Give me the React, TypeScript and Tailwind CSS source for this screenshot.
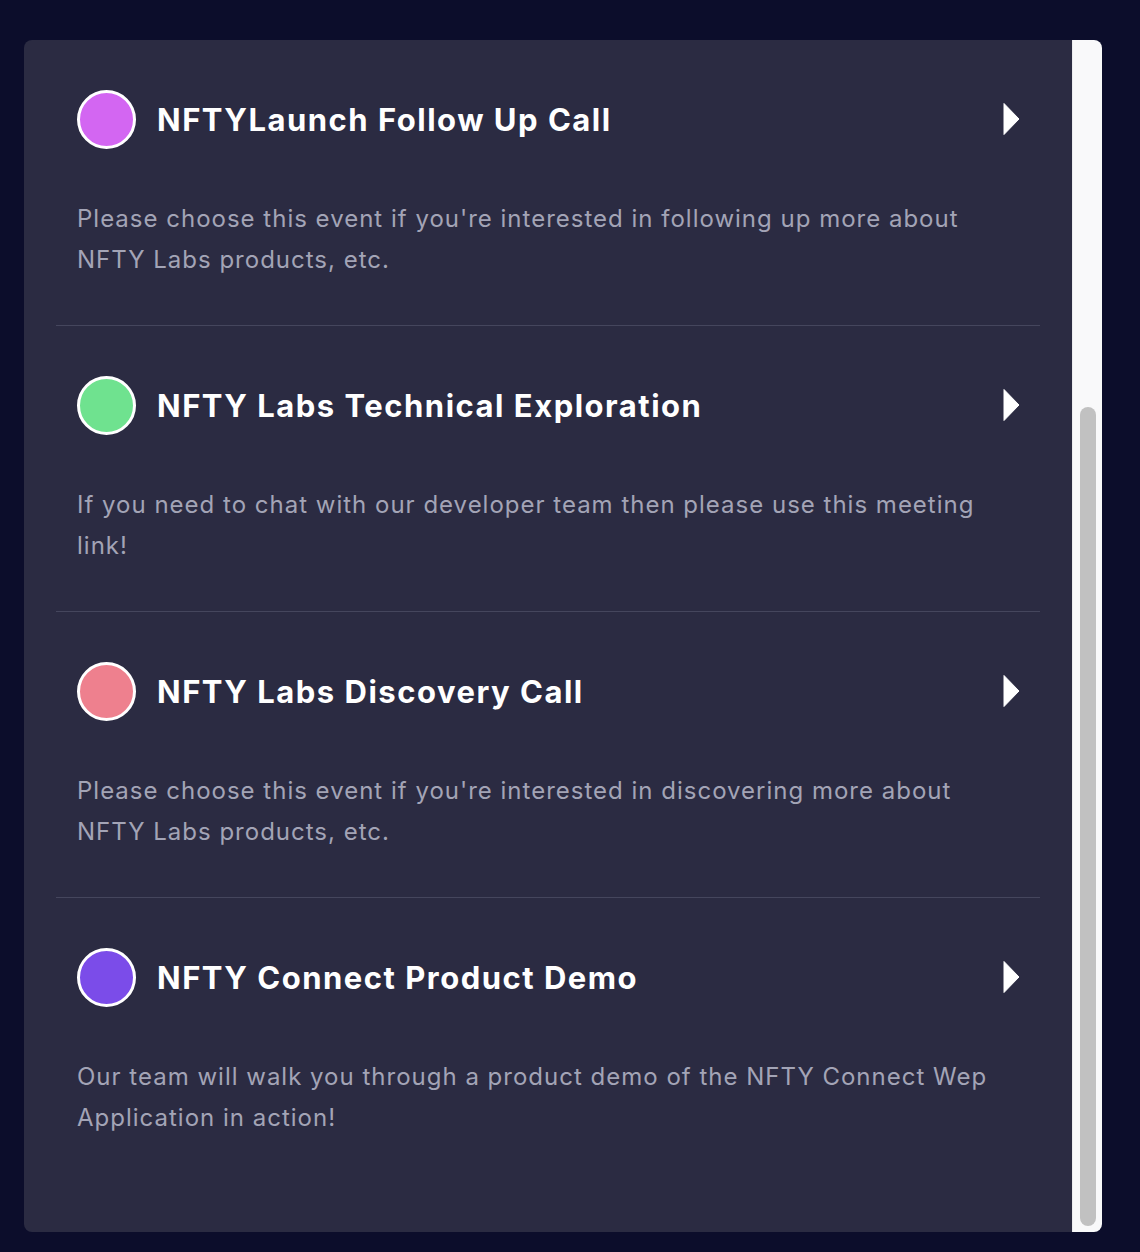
import React from "react";

const events = [
  {
    color: "#d366f2",
    title: "NFTYLaunch Follow Up Call",
    desc: "Please choose this event if you're interested in following up more about NFTY Labs products, etc.",
  },
  {
    color: "#6fe28f",
    title: "NFTY Labs Technical Exploration",
    desc: "If you need to chat with our developer team then please use this meeting link!",
  },
  {
    color: "#ee808e",
    title: "NFTY Labs Discovery Call",
    desc: "Please choose this event if you're interested in discovering more about NFTY Labs products, etc.",
  },
  {
    color: "#7b4ce9",
    title: "NFTY Connect Product Demo",
    desc: "Our team will walk you through a product demo of the NFTY Connect Wep Application in action!",
  },
];

function Chevron() {
  return (
    <svg width="19" height="34" viewBox="0 0 19 34" className="shrink-0 -mr-[1px]">
      <path d="M3 1.5 L18 17 L3 32.5 Z" fill="#ffffff" stroke="#ffffff" strokeWidth="1" strokeLinejoin="round" />
    </svg>
  );
}

export default function App() {
  return (
    <div
      className="w-[1140px] h-[1252px] bg-[#0c0d2b] pt-[40px] pl-[24px] pr-[38px] pb-[20px]"
      style={{ fontFamily: "Inter, 'Open Sans', sans-serif" }}
    >
      <div className="flex h-full rounded-[8px] overflow-hidden">
        <div className="flex-1 bg-[#2b2b42] px-[32px] overflow-hidden rounded-bl-[4px]">
          {events.map((e, i) => (
            <div
              key={i}
              className={`px-[21px] pt-[50px] pb-[45px] ${i < events.length - 1 ? "border-b border-[#45465d]" : ""}`}
            >
              <div className="flex items-center h-[58px]">
                <div
                  className="w-[59px] h-[59px] rounded-full border-[3px] border-white shrink-0"
                  style={{ backgroundColor: e.color }}
                />
                <div className="ml-[21px] flex-1 text-white font-bold text-[31px] leading-none tracking-[1.5px]">
                  {e.title}
                </div>
                <Chevron />
              </div>
              <p className="mt-[50px] text-[#a3a4b6] text-[24px] leading-[41px] tracking-[1px]">
                {e.desc}
              </p>
            </div>
          ))}
        </div>
        <div className="w-[30px] bg-[#f9f9fa] border-l border-[#ececee] flex flex-col pt-[367px] pb-[6px] items-center">
          <div className="w-[16px] flex-1 bg-[#c1c1c1] rounded-full" />
        </div>
      </div>
    </div>
  );
}
